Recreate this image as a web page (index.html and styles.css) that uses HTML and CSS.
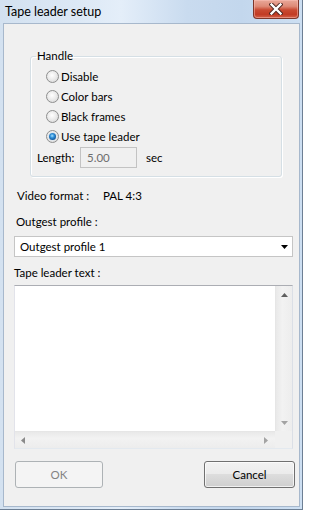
FILE: index.html
```html
<!DOCTYPE html>
<html>
<head>
<meta charset="utf-8">
<link rel="stylesheet" href="styles.css">
</head>
<body>
<div class="window">
  <div class="titlebar">
    <span class="title">Tape leader setup</span>
    <span class="close">
      <svg width="14" height="12" viewBox="0 0 14 12">
        <path d="M2.5 1.5 L11.5 10.5 M11.5 1.5 L2.5 10.5" stroke="#4a2520" stroke-width="4.2" stroke-linecap="square" fill="none"/>
        <path d="M2.5 1.5 L11.5 10.5 M11.5 1.5 L2.5 10.5" stroke="#ffffff" stroke-width="2.4" stroke-linecap="square" fill="none"/>
      </svg>
    </span>
  </div>
  <div class="client">
    <fieldset class="group">
      <legend class="legend">Handle</legend>
      <div class="radio first"><span class="dot"></span>Disable</div>
      <div class="radio"><span class="dot"></span>Color bars</div>
      <div class="radio"><span class="dot"></span>Black frames</div>
      <div class="radio"><span class="dot on"><span class="pip"></span></span>Use tape leader</div>
      <div class="length-row">
        <span class="length-label">Length:</span>
        <span class="num">5.00</span>
        <span class="unit">sec</span>
      </div>
    </fieldset>
    <div class="info-row"><span class="info-label">Video format :</span><span>PAL 4:3</span></div>
    <div class="profile-label">Outgest profile :</div>
    <div class="combo">
      <span>Outgest profile 1</span>
      <svg class="combo-arrow" width="7" height="4" viewBox="0 0 7 4"><path d="M0 0 H7 L3.5 4 Z" fill="#000"/></svg>
    </div>
    <div class="text-label">Tape leader text :</div>
    <div class="memo">
      <div class="memo-body">
        <div class="memo-text"></div>
        <div class="vscroll">
          <svg width="7" height="4" viewBox="0 0 7 4"><path d="M0 4 H7 L3.5 0 Z" fill="#5f5f5f"/></svg>
          <svg width="7" height="4" viewBox="0 0 7 4"><path d="M0 0 H7 L3.5 4 Z" fill="#a3a3a3"/></svg>
        </div>
      </div>
      <div class="hscroll-row">
        <div class="hscroll">
          <svg width="4" height="7" viewBox="0 0 4 7"><path d="M4 0 V7 L0 3.5 Z" fill="#8a8a8a"/></svg>
          <svg width="4" height="7" viewBox="0 0 4 7"><path d="M0 0 V7 L4 3.5 Z" fill="#a3a3a3"/></svg>
        </div>
        <div class="corner"></div>
      </div>
    </div>
    <div class="buttons">
      <button class="btn ok" disabled>OK</button>
      <button class="btn cancel">Cancel</button>
    </div>
  </div>
</div>
</body>
</html>
```

FILE: styles.css
```css
html, body {
  margin: 0;
  padding: 0;
}
body {
  font-family: Lato, "Noto Sans", sans-serif;
  font-size: 11.5px;
  color: #000;
  background: #fff;
}
.window {
  width: 303px;
  height: 510px;
  box-sizing: border-box;
  padding: 0 2px 2px 3px;
  border-right: 1px solid #6d7f94;
  border-bottom: 1px solid #6d7f94;
  background: linear-gradient(90deg, #d3e1f0 0%, #dce8f5 25%, #e4eef9 40%, #c9dbef 62%, #c3d7ed 80%, #cddff2 100%);
  display: flex;
  flex-direction: column;
}
.titlebar {
  height: 23px;
  display: flex;
  align-items: flex-start;
  justify-content: space-between;
  flex: none;
}
.title {
  padding-left: 2px;
  line-height: 23px;
  font-size: 12.5px;
  color: #000;
}
.close {
  width: 46px;
  height: 19px;
  box-sizing: border-box;
  margin-right: 1px;
  border: 1px solid #7d362a;
  border-top: none;
  border-radius: 0 0 4px 4px;
  background: linear-gradient(180deg, #e9a899 0%, #de8a77 35%, #c94a32 55%, #c23b24 80%, #d3624a 100%);
  box-shadow: inset 0 0 0 1px rgba(255, 200, 190, 0.45);
  display: flex;
  align-items: center;
  justify-content: center;
}
.client {
  flex: 1;
  background: #f0f0f0;
  border: 1px solid #a7b8cc;
  display: flex;
  flex-direction: column;
  align-items: flex-start;
}
.group {
  align-self: stretch;
  margin: 24px 17px 0 26px;
  padding: 0 0 8px 0;
  border: 1px solid #d5dfe5;
  border-radius: 3px;
  box-shadow: inset 1px 1px 0 #fff, 1px 1px 0 #fff;
  min-width: 0;
}
.legend {
  margin-left: 5px;
  padding: 0 1px;
  line-height: 16px;
}
.radio {
  height: 20px;
  display: flex;
  align-items: center;
  padding-left: 15px;
}
.radio.first {
  margin-top: 2px;
}
.dot {
  width: 13px;
  height: 13px;
  box-sizing: border-box;
  margin-right: 2px;
  border-radius: 50%;
  border: 1px solid #8e8f8f;
  background: radial-gradient(circle at 45% 40%, #ffffff 0%, #ececec 45%, #d2d2d2 100%);
  display: flex;
  align-items: center;
  justify-content: center;
}
.pip {
  width: 7px;
  height: 7px;
  border-radius: 50%;
  background: radial-gradient(circle at 45% 40%, #a6e2ff 0%, #2f8fd8 35%, #0f5396 75%, #0a3a6c 100%);
  box-shadow: 0 0 0 1px #dfe6ec;
}
.length-row {
  height: 22px;
  display: flex;
  align-items: center;
  padding-left: 6px;
}
.length-label {
  width: 43px;
}
.num {
  width: 57px;
  height: 21px;
  box-sizing: border-box;
  border: 1px solid #c3c3c3;
  background: #f0f0f0;
  color: #6d6d6d;
  padding-left: 6px;
  line-height: 19px;
}
.unit {
  margin-left: 9px;
}
.info-row {
  margin-top: 11px;
  line-height: 16px;
  padding-left: 13px;
  display: flex;
}
.info-label {
  width: 86px;
}
.profile-label {
  margin-top: 10px;
  line-height: 16px;
  padding-left: 12px;
}
.combo {
  margin: 6px 0 0 10px;
  width: 279px;
  height: 21px;
  box-sizing: border-box;
  border: 1px solid #c5c5c5;
  background: #fff;
  padding: 0 4px 0 5px;
  display: flex;
  align-items: center;
  justify-content: space-between;
}
.text-label {
  margin-top: 8px;
  line-height: 16px;
  padding-left: 10px;
}
.memo {
  margin: 4px 0 0 10px;
  width: 279px;
  height: 164px;
  box-sizing: border-box;
  border: 1px solid;
  border-color: #abadb3 #dbdfe6 #e3e9ef #e2e3ea;
  background: #fff;
  display: flex;
  flex-direction: column;
}
.memo-body {
  flex: 1;
  display: flex;
}
.memo-text {
  flex: 1;
}
.vscroll {
  width: 17px;
  box-sizing: border-box;
  border-left: 1px solid #e6e6e6;
  background: linear-gradient(90deg, #e9e9e9, #f2f2f2 40%, #ededed);
  display: flex;
  flex-direction: column;
  align-items: center;
  justify-content: space-between;
  padding: 7px 0 6px 1px;
}
.hscroll-row {
  height: 17px;
  display: flex;
}
.hscroll {
  flex: 1;
  box-sizing: border-box;
  border-top: 1px solid #e6e6e6;
  background: linear-gradient(180deg, #e9e9e9, #f2f2f2 40%, #ededed);
  display: flex;
  align-items: center;
  justify-content: space-between;
  padding: 0 7px 0 6px;
}
.corner {
  width: 17px;
  background: #f0f0f0;
}
.buttons {
  align-self: stretch;
  margin-top: 12px;
  padding: 0 4px 0 11px;
  display: flex;
  justify-content: space-between;
}
.btn {
  height: 27px;
  box-sizing: border-box;
  border-radius: 3px;
  font-family: Lato, "Noto Sans", sans-serif;
  font-size: 11.5px;
  padding: 0;
}
.ok {
  width: 88px;
  border: 1px solid #adb2b5;
  background: #f4f4f4;
  color: #838383;
}
.cancel {
  width: 91px;
  border: 1px solid #707070;
  color: #000;
  background: linear-gradient(180deg, #f2f2f2 0%, #ebebeb 49%, #dddddd 50%, #cfcfcf 100%);
  box-shadow: inset 0 0 0 1px rgba(255, 255, 255, 0.7);
}
```
